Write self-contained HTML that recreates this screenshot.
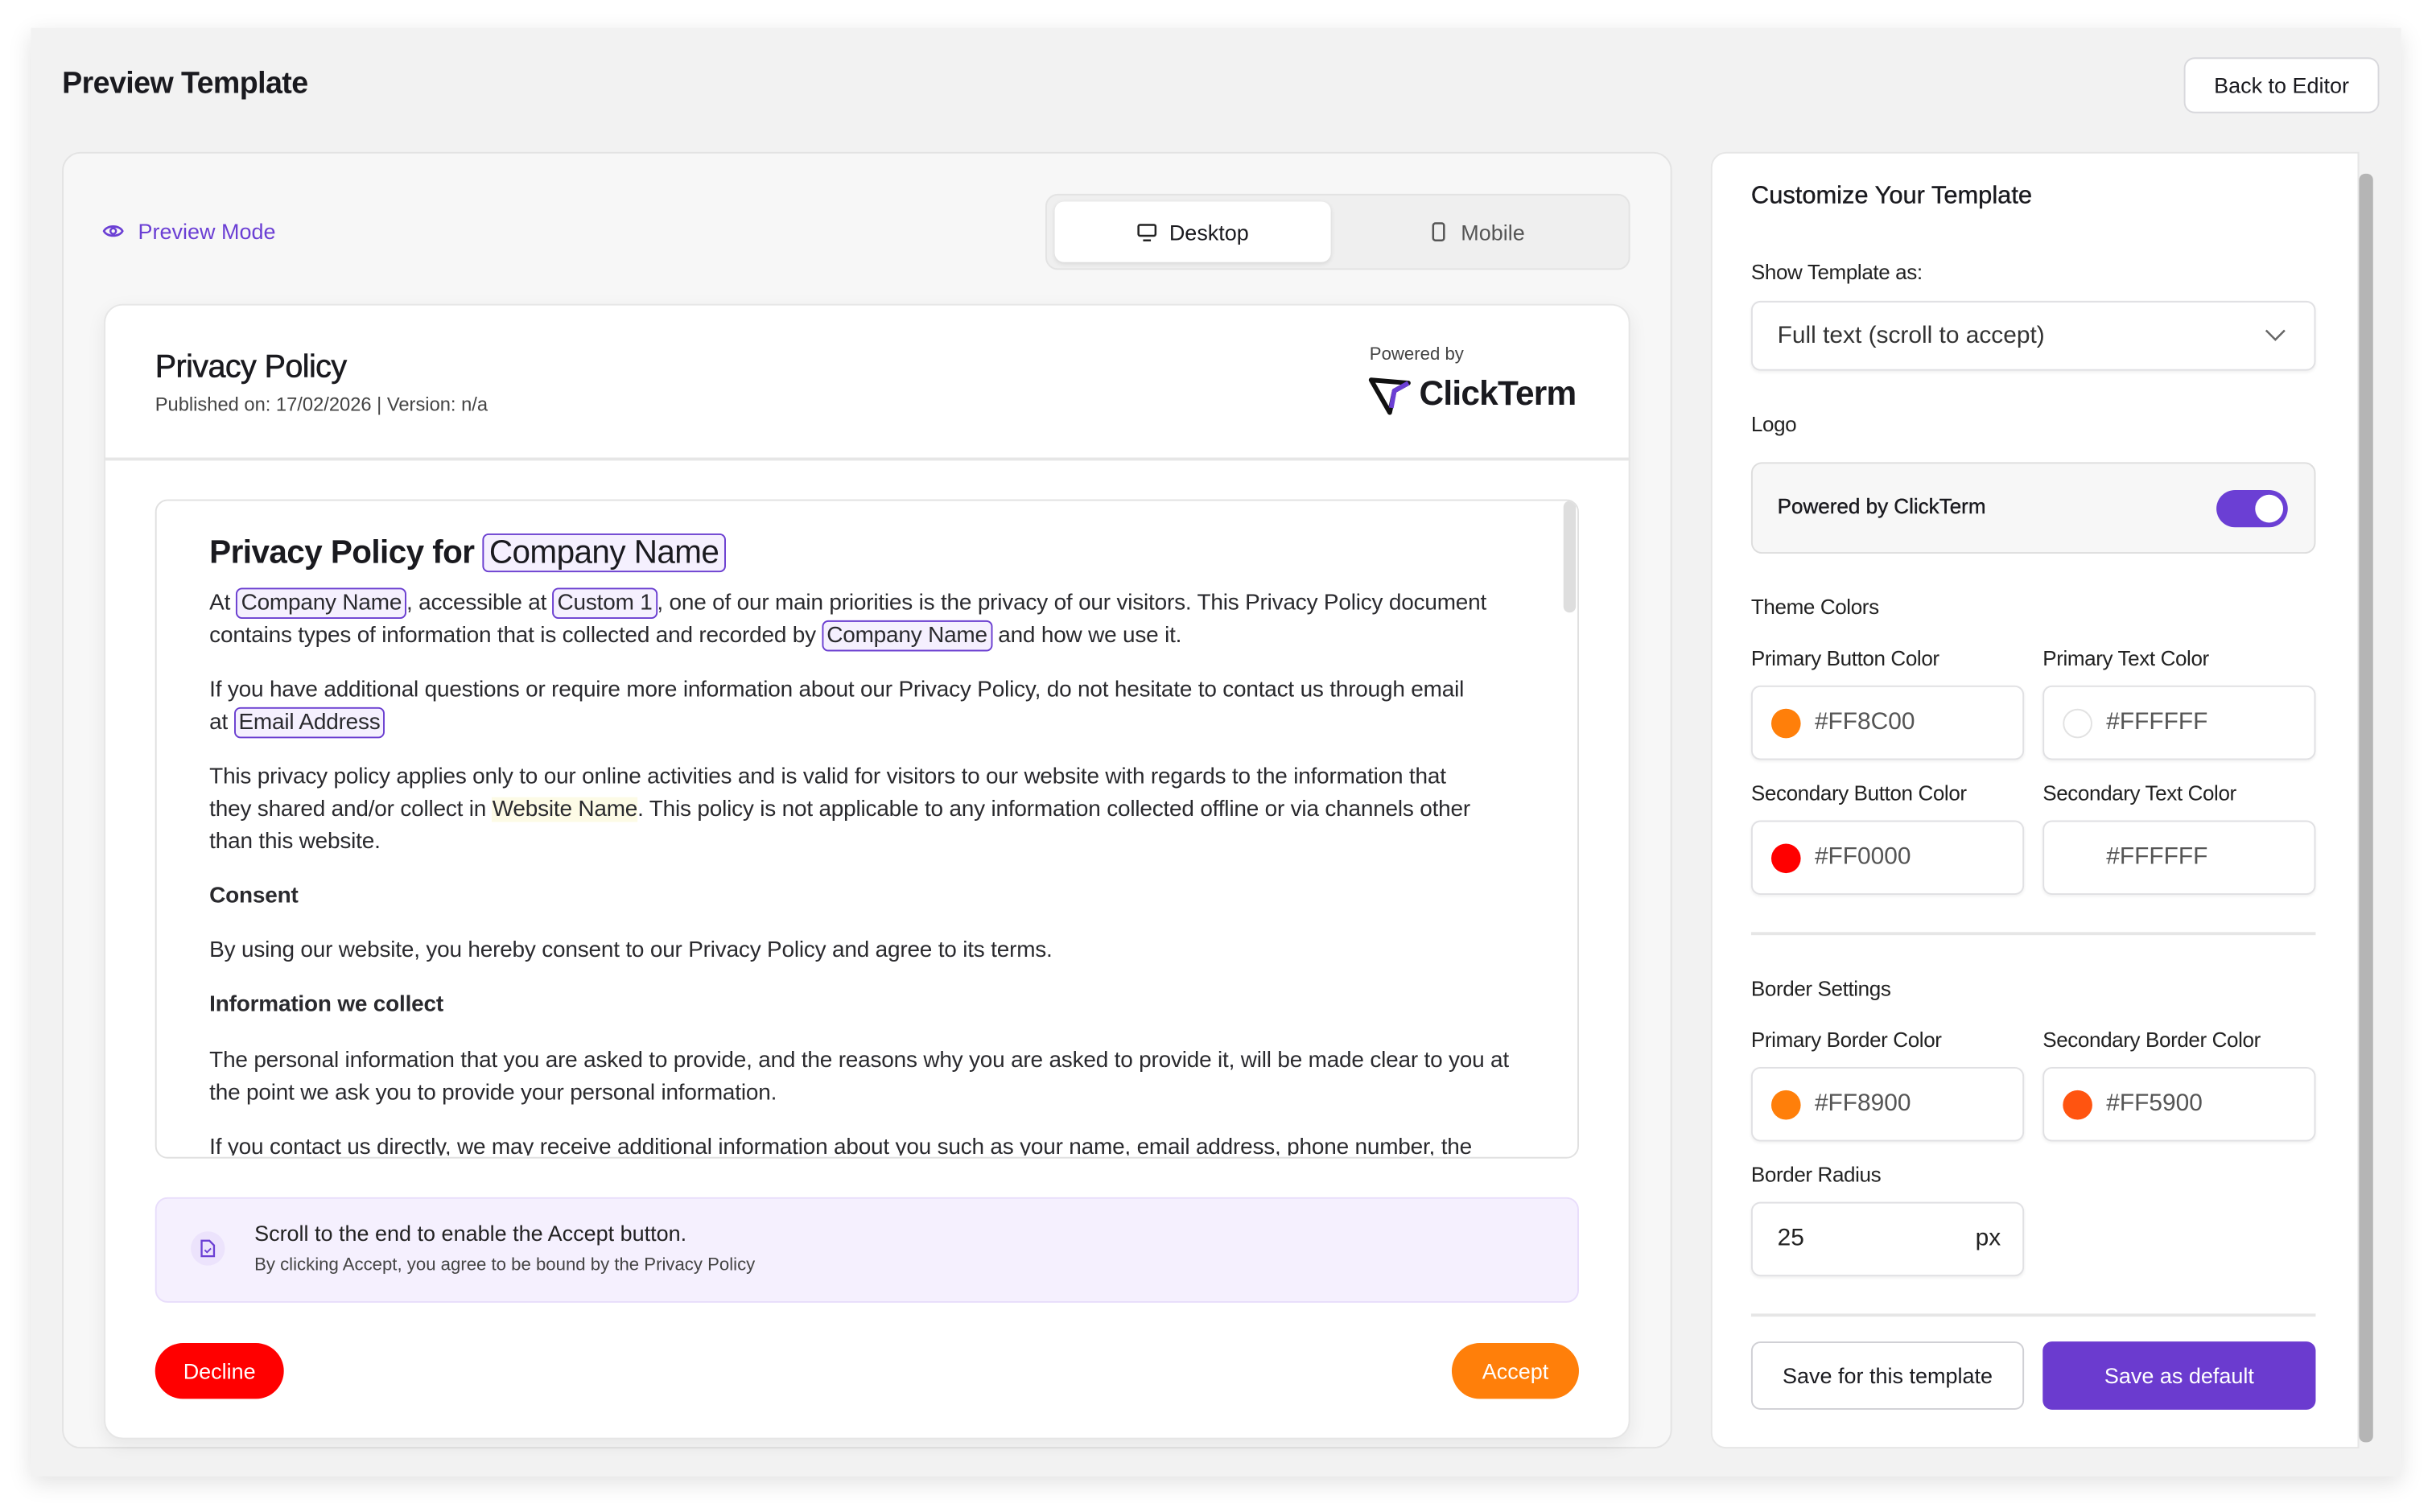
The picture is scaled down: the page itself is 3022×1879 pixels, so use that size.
<!DOCTYPE html>
<html><head><meta charset="utf-8"><style>
*{box-sizing:border-box;margin:0;padding:0}
html,body{width:3022px;height:1878px;overflow:hidden;background:#fff}
#w{position:absolute;left:0;top:0;width:1568px;height:975px;transform:scale(1.9273);transform-origin:0 0;font-family:"Liberation Sans",sans-serif;color:#1a1a1f}
.a{position:absolute}
.frame{left:20px;top:18px;width:1528px;height:934px;background:#f2f2f2;box-shadow:0 4px 14px rgba(0,0,0,.12)}
.lbl{font-size:13.5px;color:#222;letter-spacing:-.2px}
.inp{background:#fff;border:1px solid #e0e0e3;border-radius:6px;box-shadow:0 1px 2px rgba(0,0,0,.06);font-size:15.5px;color:#555;display:flex;align-items:center;padding-left:12px}
.dot{width:19px;height:19px;border-radius:50%;margin-right:9px}
.ph{border:1.3px solid #6a3ed0;background:#f5f0fe;border-radius:4px;padding:1px 2px}
.p{font-size:14.5px;line-height:21px;color:#2a2a2e;letter-spacing:-.1px;position:absolute;left:135px;width:838px}
</style></head><body><div id="w">
<div class="a frame"></div>
<div class="a" style="left:40px;top:43px;font-size:19.5px;font-weight:600;letter-spacing:-.3px">Preview Template</div>
<div class="a" style="left:1408px;top:37px;width:126px;height:36px;background:#fff;border:1px solid #d8d8dc;border-radius:7px;font-size:14px;display:flex;align-items:center;justify-content:center">Back to Editor</div>

<div class="a" style="left:40px;top:98px;width:1038px;height:836px;background:#f7f7f7;border:1px solid #e3e3e3;border-radius:12px"></div>
<svg class="a" style="left:66px;top:143px" width="14" height="12" viewBox="0 0 14 12"><path d="M1 6C3 2 11 2 13 6C11 10 3 10 1 6Z" fill="none" stroke="#6b3fd4" stroke-width="1.4"/><circle cx="7" cy="6" r="1.8" fill="none" stroke="#6b3fd4" stroke-width="1.3"/></svg>
<div class="a" style="left:89px;top:141px;font-size:14px;color:#6b3fd4;font-weight:500">Preview Mode</div>
<div class="a" style="left:674px;top:125px;width:377px;height:49px;background:#efefef;border:1px solid #e3e3e3;border-radius:8px"></div>
<div class="a" style="left:680px;top:130px;width:178px;height:39px;background:#fff;border-radius:6px;box-shadow:0 1px 3px rgba(0,0,0,.1);display:flex;align-items:center;justify-content:center;font-size:14px;font-weight:500"><svg width="13" height="12" style="margin-right:8px"><rect x="1" y="1" width="11" height="7" rx="1" fill="none" stroke="#222" stroke-width="1.3"/><path d="M4 11H9" stroke="#222" stroke-width="1.3"/></svg>Desktop</div>
<div class="a" style="left:858px;top:130px;width:190px;height:39px;display:flex;align-items:center;justify-content:center;font-size:14px;color:#555"><svg width="9" height="13" style="margin-right:10px"><rect x="1" y="1" width="7" height="11" rx="1.5" fill="none" stroke="#555" stroke-width="1.3"/></svg>Mobile</div>

<div class="a" style="left:67px;top:196px;width:984px;height:732px;background:#fff;border:1px solid #e6e6e6;border-radius:12px;box-shadow:0 4px 12px rgba(0,0,0,.07)"></div>
<div class="a" style="left:67px;top:295px;width:984px;height:1.5px;background:#e6e6e6"></div>
<div class="a" style="left:100px;top:225px;font-size:20.5px;font-weight:500;letter-spacing:-.3px;-webkit-text-stroke:.3px #1a1a1f">Privacy Policy</div>
<div class="a" style="left:100px;top:254px;font-size:12.3px;color:#444">Published on: 17/02/2026 | Version: n/a</div>
<div class="a" style="left:883px;top:223px;font-size:11.5px;color:#444">Powered by</div>
<svg class="a" style="left:882px;top:243px" width="30" height="26" viewBox="0 0 30 26"><path d="M2 2L26 4L17 9L14 23Z" fill="none" stroke="#111" stroke-width="3" stroke-linejoin="round"/><path d="M26 4L17 9L15 20" fill="none" stroke="#6b3fd4" stroke-width="3"/></svg>
<div class="a" style="left:915px;top:241px;font-size:22px;font-weight:700;letter-spacing:-.4px">ClickTerm</div>

<div class="a" style="left:100px;top:322px;width:918px;height:425px;border:1px solid #e0e0e0;border-radius:8px;overflow:hidden">
<div class="a" style="left:907px;top:0;width:8px;height:72px;background:#dedede;border-radius:4px"></div>
</div>
<div class="a" style="left:135px;top:341px;font-size:21px;font-weight:600;letter-spacing:-.3px;line-height:32px">Privacy Policy for <span class="ph" style="font-weight:400;padding:0 3px">Company Name</span></div>
<div class="p" style="top:379px">At <span class="ph">Company Name</span>, accessible at <span class="ph">Custom 1</span>, one of our main priorities is the privacy of our visitors. This Privacy Policy document contains types of information that is collected and recorded by <span class="ph">Company Name</span> and how we use it.</div>
<div class="p" style="top:435px">If you have additional questions or require more information about our Privacy Policy, do not hesitate to contact us through email<br>at <span class="ph">Email Address</span></div>
<div class="p" style="top:491px">This privacy policy applies only to our online activities and is valid for visitors to our website with regards to the information that<br>they shared and/or collect in <span style="background:#fdfbe6">Website Name</span>. This policy is not applicable to any information collected offline or via channels other than this website.</div>
<div class="p" style="top:568px;font-weight:700">Consent</div>
<div class="p" style="top:603px">By using our website, you hereby consent to our Privacy Policy and agree to its terms.</div>
<div class="p" style="top:638px;font-weight:700">Information we collect</div>
<div class="p" style="top:674px">The personal information that you are asked to provide, and the reasons why you are asked to provide it, will be made clear to you at the point we ask you to provide your personal information.</div>
<div class="a" style="left:101px;top:729px;width:916px;height:16px;overflow:hidden"><div class="p" style="left:34px;top:1px;white-space:nowrap">If you contact us directly, we may receive additional information about you such as your name, email address, phone number, the</div></div>

<div class="a" style="left:100px;top:772px;width:918px;height:68px;background:#f5f0fe;border:1px solid #e8ddfb;border-radius:8px"></div>
<div class="a" style="left:123px;top:794px;width:22px;height:22px;border-radius:50%;background:#ece3fc"></div>
<svg class="a" style="left:129px;top:799px" width="10" height="12"><path d="M1 1H6L9 4V11H1Z" fill="none" stroke="#6b3fd4" stroke-width="1.2"/><path d="M3 7L4.5 8.5L7 6" fill="none" stroke="#6b3fd4" stroke-width="1"/></svg>
<div class="a" style="left:164px;top:787px;font-size:14px;color:#222">Scroll to the end to enable the Accept button.</div>
<div class="a" style="left:164px;top:810px;font-size:11.5px;color:#444">By clicking Accept, you agree to be bound by the Privacy Policy</div>
<div class="a" style="left:100px;top:866px;width:83px;height:36px;background:#ff0000;border-radius:18px;color:#fff;font-size:14px;font-weight:500;display:flex;align-items:center;justify-content:center">Decline</div>
<div class="a" style="left:936px;top:866px;width:82px;height:36px;background:#ff7f0a;border-radius:18px;color:#fff;font-size:14px;font-weight:500;display:flex;align-items:center;justify-content:center">Accept</div>

<div class="a" style="left:1103px;top:98px;width:418px;height:836px;background:#fff;border:1px solid #e6e6e6;border-radius:10px 0 0 10px"></div>
<div class="a" style="left:1521px;top:112px;width:9px;height:818px;background:#b5b5b5;border-radius:4px"></div>
<div class="a" style="left:1129px;top:118px;font-size:16px;font-weight:500;-webkit-text-stroke:.2px #1a1a1f">Customize Your Template</div>
<div class="a lbl" style="left:1129px;top:168px">Show Template as:</div>
<div class="a inp" style="left:1129px;top:194px;width:364px;height:45px;color:#333;padding-left:16px">Full text (scroll to accept)<svg style="position:absolute;right:18px;top:17px" width="14" height="9"><path d="M1 1L7 7L13 1" fill="none" stroke="#666" stroke-width="1.3"/></svg></div>
<div class="a lbl" style="left:1129px;top:266px">Logo</div>
<div class="a" style="left:1129px;top:298px;width:364px;height:59px;background:#f7f7f7;border:1px solid #ddd;border-radius:7px"></div>
<div class="a" style="left:1146px;top:319px;font-size:13.5px;font-weight:500;-webkit-text-stroke:.2px #1a1a1f">Powered by ClickTerm</div>
<div class="a" style="left:1429px;top:316px;width:46px;height:24px;background:#6b3fd4;border-radius:12px"><div class="a" style="left:25px;top:3px;width:18px;height:18px;border-radius:50%;background:#fff"></div></div>
<div class="a lbl" style="left:1129px;top:384px">Theme Colors</div>
<div class="a lbl" style="left:1129px;top:417px">Primary Button Color</div>
<div class="a lbl" style="left:1317px;top:417px">Primary Text Color</div>
<div class="a inp" style="left:1129px;top:442px;width:176px;height:48px"><div class="dot" style="background:#ff7f0a"></div>#FF8C00</div>
<div class="a inp" style="left:1317px;top:442px;width:176px;height:48px"><div class="dot" style="border:1px solid #e2e2e2"></div>#FFFFFF</div>
<div class="a lbl" style="left:1129px;top:504px">Secondary Button Color</div>
<div class="a lbl" style="left:1317px;top:504px">Secondary Text Color</div>
<div class="a inp" style="left:1129px;top:529px;width:176px;height:48px"><div class="dot" style="background:#ff0000"></div>#FF0000</div>
<div class="a inp" style="left:1317px;top:529px;width:176px;height:48px;padding-left:40px">#FFFFFF</div>
<div class="a" style="left:1129px;top:601px;width:364px;height:1.5px;background:#e6e6e6"></div>
<div class="a lbl" style="left:1129px;top:630px">Border Settings</div>
<div class="a lbl" style="left:1129px;top:663px">Primary Border Color</div>
<div class="a lbl" style="left:1317px;top:663px">Secondary Border Color</div>
<div class="a inp" style="left:1129px;top:688px;width:176px;height:48px"><div class="dot" style="background:#ff7f0a"></div>#FF8900</div>
<div class="a inp" style="left:1317px;top:688px;width:176px;height:48px"><div class="dot" style="background:#ff5410"></div>#FF5900</div>
<div class="a lbl" style="left:1129px;top:750px">Border Radius</div>
<div class="a inp" style="left:1129px;top:775px;width:176px;height:48px;color:#222;padding-left:16px">25<span style="position:absolute;right:14px">px</span></div>
<div class="a" style="left:1129px;top:847px;width:364px;height:1.5px;background:#e6e6e6"></div>
<div class="a" style="left:1129px;top:865px;width:176px;height:44px;background:#fff;border:1px solid #cfcfd4;border-radius:6px;font-size:14px;font-weight:500;display:flex;align-items:center;justify-content:center">Save for this template</div>
<div class="a" style="left:1317px;top:865px;width:176px;height:44px;background:#6b3bcf;border-radius:6px;color:#fff;font-size:14px;font-weight:500;display:flex;align-items:center;justify-content:center">Save as default</div>
</div></body></html>
